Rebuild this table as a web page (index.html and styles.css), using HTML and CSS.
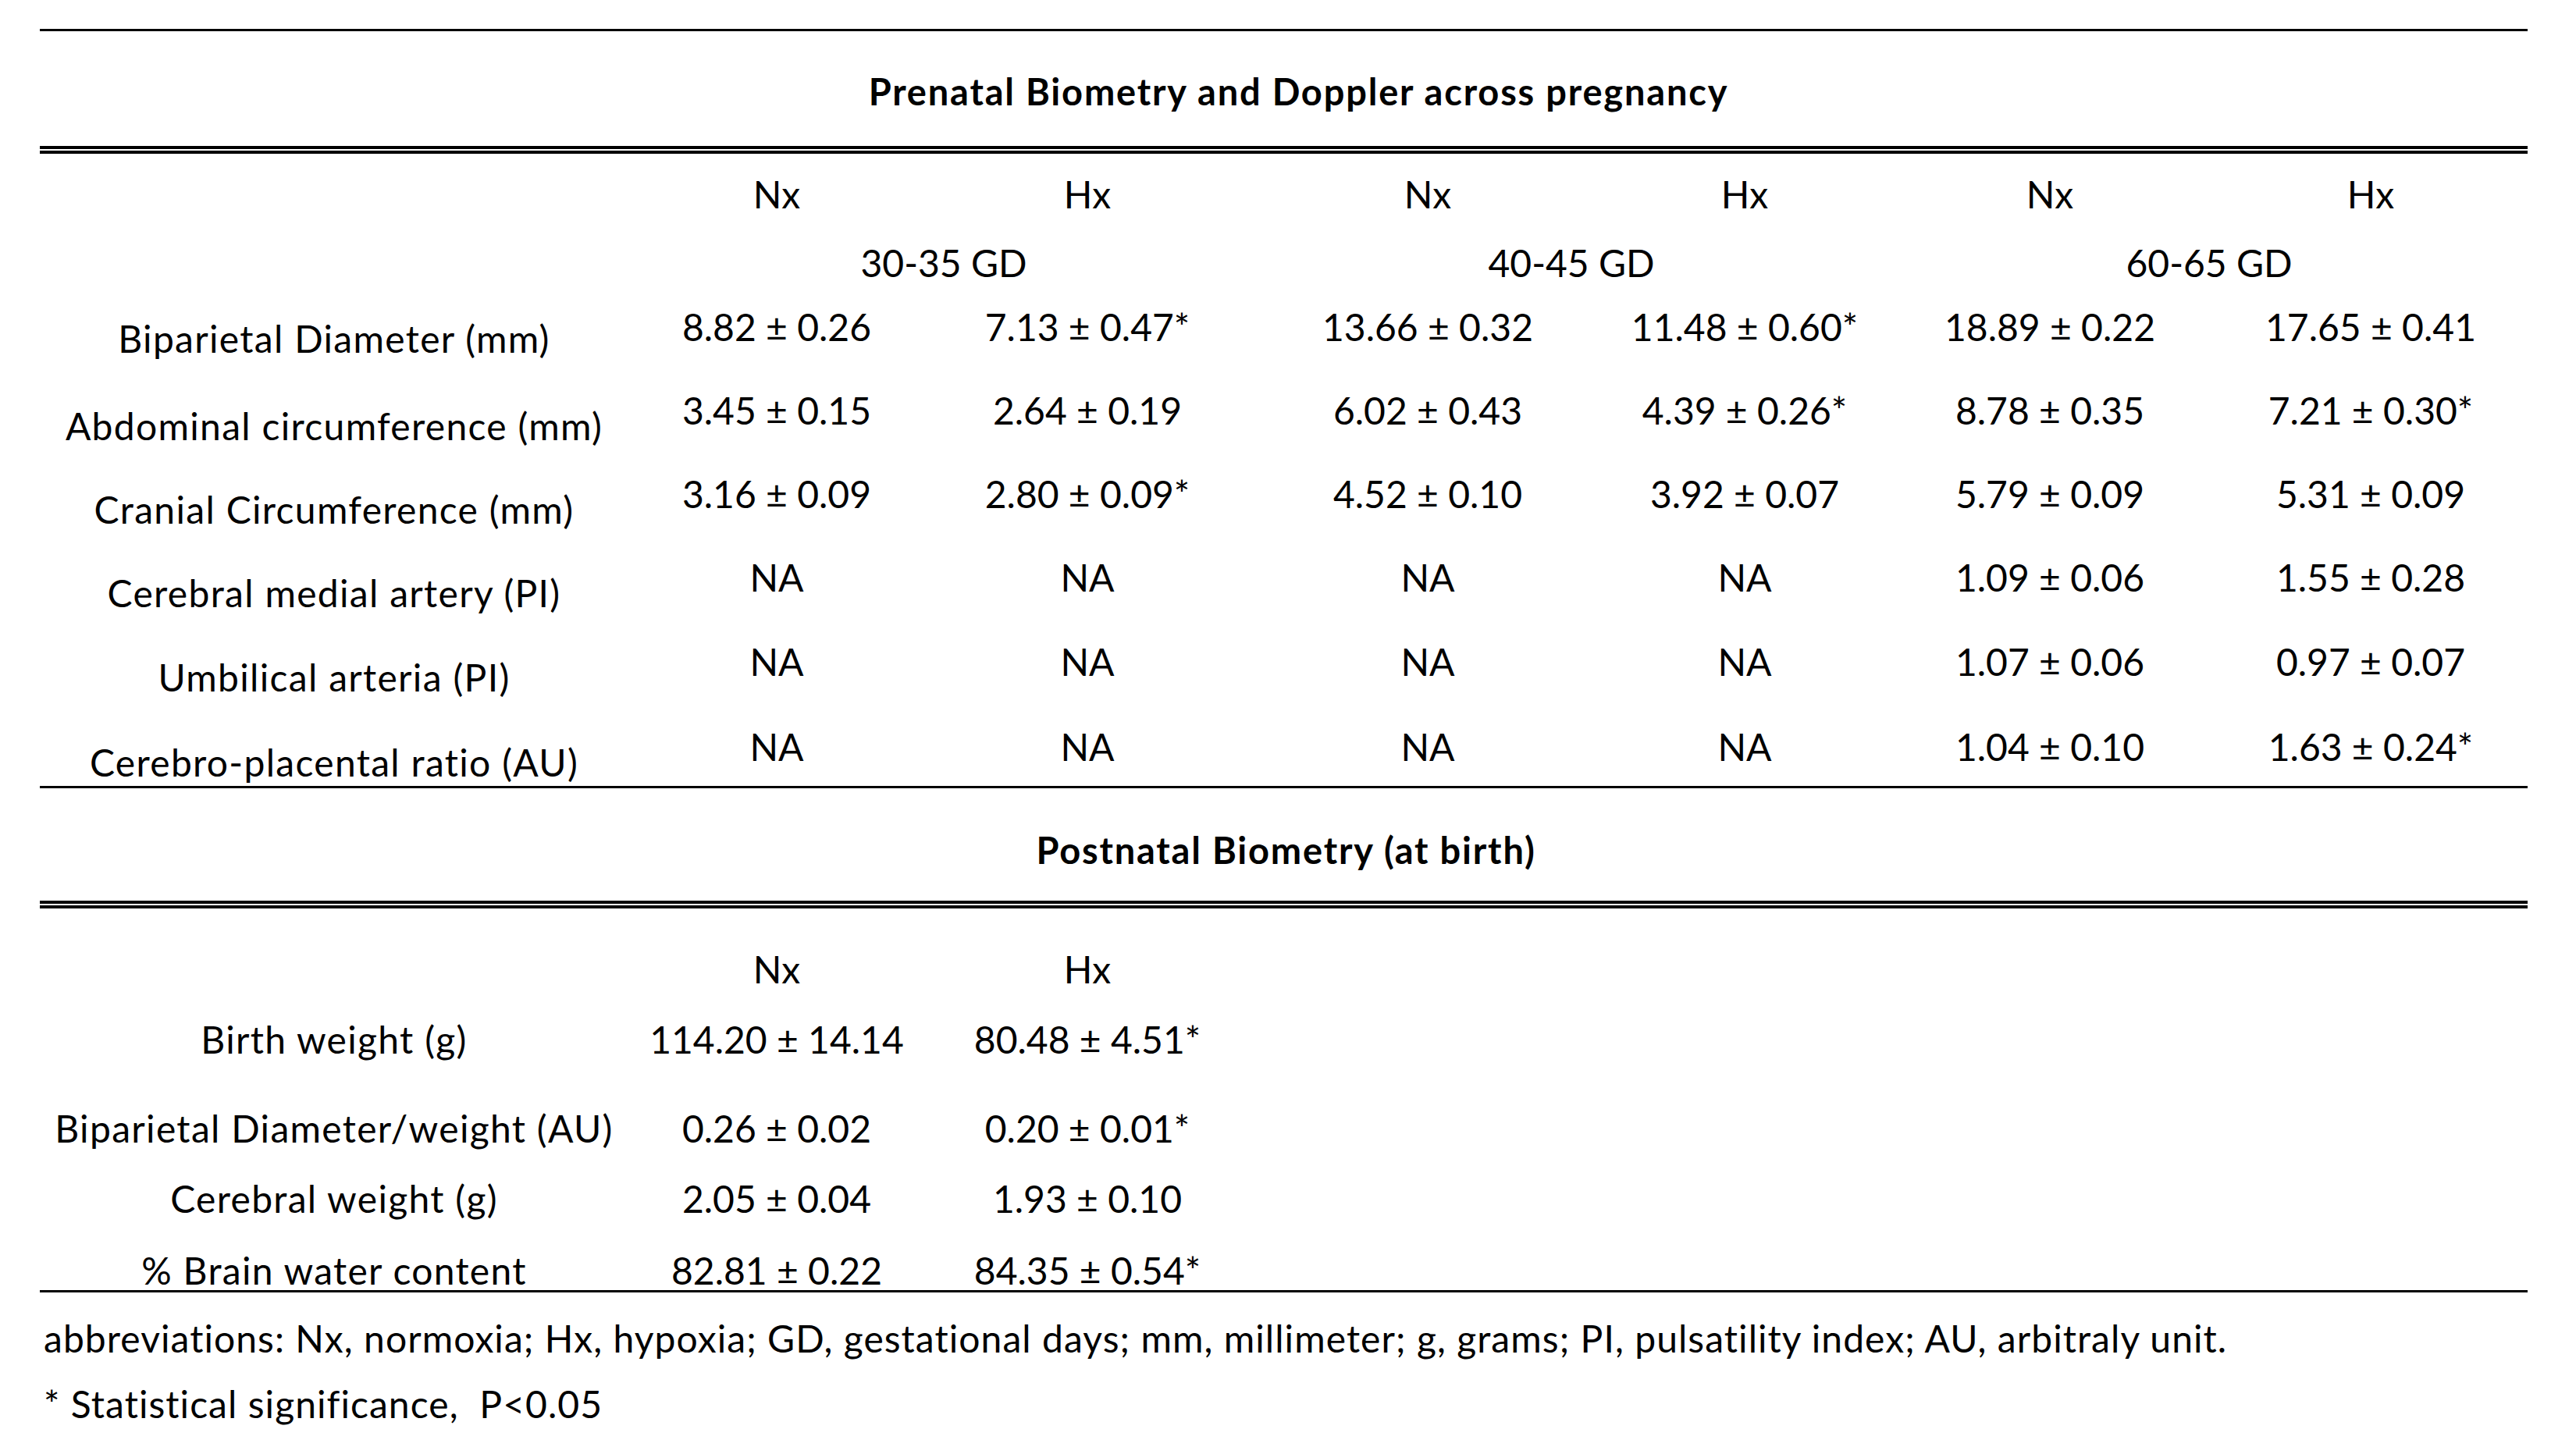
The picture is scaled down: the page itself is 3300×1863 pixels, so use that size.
FILE: index.html
```html
<!DOCTYPE html>
<html lang="en">
<head>
<meta charset="utf-8">
<title>Prenatal and Postnatal Biometry</title>
<link rel="stylesheet" href="styles.css">
</head>
<body>
<div class="page">
  <div class="rule rule-top"></div>
  <div class="section-title title-pre">Prenatal Biometry and Doppler across pregnancy</div>
  <div class="rule rule-double"></div>

  <div class="block block-pre">
    <div class="row row-head r-first">
      <div class="lbl"></div>
      <div>Nx</div><div>Hx</div><div>Nx</div><div>Hx</div><div>Nx</div><div>Hx</div>
    </div>
    <div class="row row-gd">
      <div class="lbl"></div>
      <div class="span2 gd">30-35 GD</div>
      <div class="span2 gd">40-45 GD</div>
      <div class="span2 gd">60-65 GD</div>
    </div>
    <div class="row row-data d1">
      <div class="lbl low low-a">Biparietal Diameter (mm)</div>
      <div>8.82 ± 0.26</div><div>7.13 ± 0.47*</div><div>13.66 ± 0.32</div><div>11.48 ± 0.60*</div><div>18.89 ± 0.22</div><div>17.65 ± 0.41</div>
    </div>
    <div class="row row-data">
      <div class="lbl low">Abdominal circumference (mm)</div>
      <div>3.45 ± 0.15</div><div>2.64 ± 0.19</div><div>6.02 ± 0.43</div><div>4.39 ± 0.26*</div><div>8.78 ± 0.35</div><div>7.21 ± 0.30*</div>
    </div>
    <div class="row row-data">
      <div class="lbl low">Cranial Circumference (mm)</div>
      <div>3.16 ± 0.09</div><div>2.80 ± 0.09*</div><div>4.52 ± 0.10</div><div>3.92 ± 0.07</div><div>5.79 ± 0.09</div><div>5.31 ± 0.09</div>
    </div>
    <div class="row row-data">
      <div class="lbl low">Cerebral medial artery (PI)</div>
      <div>NA</div><div>NA</div><div>NA</div><div>NA</div><div>1.09 ± 0.06</div><div>1.55 ± 0.28</div>
    </div>
    <div class="row row-data d5">
      <div class="lbl low">Umbilical arteria (PI)</div>
      <div>NA</div><div>NA</div><div>NA</div><div>NA</div><div>1.07 ± 0.06</div><div>0.97 ± 0.07</div>
    </div>
    <div class="row row-data d6">
      <div class="lbl low low-z">Cerebro-placental ratio (AU)</div>
      <div>NA</div><div>NA</div><div>NA</div><div>NA</div><div>1.04 ± 0.10</div><div>1.63 ± 0.24*</div>
    </div>
  </div>

  <div class="rule rule-single"></div>
  <div class="section-title title-post">Postnatal Biometry (at birth)</div>
  <div class="rule rule-double"></div>

  <div class="block block-post">
    <div class="row p-head">
      <div class="lbl"></div><div>Nx</div><div>Hx</div>
    </div>
    <div class="row p-birth">
      <div class="lbl">Birth weight (g)</div><div>114.20 ± 14.14</div><div>80.48 ± 4.51*</div>
    </div>
    <div class="row p-bpd">
      <div class="lbl">Biparietal Diameter/weight (AU)</div><div>0.26 ± 0.02</div><div>0.20 ± 0.01*</div>
    </div>
    <div class="row p-cw">
      <div class="lbl">Cerebral weight (g)</div><div>2.05 ± 0.04</div><div>1.93 ± 0.10</div>
    </div>
    <div class="row p-water">
      <div class="lbl">% Brain water content</div><div>82.81 ± 0.22</div><div>84.35 ± 0.54*</div>
    </div>
  </div>

  <div class="rule rule-end"></div>
  <p class="note note-abbr">abbreviations: Nx, normoxia; Hx, hypoxia; GD, gestational days; mm, millimeter; g, grams; PI, pulsatility index; AU, arbitraly unit.</p>
  <p class="note note-sig">* Statistical significance,&nbsp; P&lt;0.05</p>
</div>
</body>
</html>
```

FILE: styles.css
```css
html, body {
  margin: 0;
  padding: 0;
  background: #ffffff;
}

body {
  width: 3300px;
  height: 1863px;
  overflow: hidden;
  color: #000000;
  font-family: Lato, "Open Sans", "Liberation Sans", sans-serif;
  font-size: 48px;
}

.page {
  margin-left: 51px;
  width: 3187px;
}

.rule {
  background: #000000;
}

.rule-top {
  margin-top: 37px;
  height: 3px;
}

.rule-single {
  margin-top: 25px;
  height: 3px;
}

.rule-end {
  margin-top: 0;
  height: 3px;
}

.rule-double {
  height: 2px;
  background: transparent;
  border-top: 4px solid #000000;
  border-bottom: 4px solid #000000;
}

.section-title {
  font-weight: 700;
  font-size: 47px;
  letter-spacing: 1.8px;
  text-align: center;
  box-sizing: border-box;
}

.title-pre {
  height: 147px;
  line-height: 139px;
  padding-top: 8px;
  padding-left: 38px;
}

.title-post {
  height: 144px;
  line-height: 130px;
  padding-top: 14px;
  padding-left: 6px;
}

.row {
  display: grid;
  grid-template-columns: 754px 380px 416px 456px 356px 426px 396px;
  height: 50px;
  line-height: 50px;
  text-align: center;
  white-space: nowrap;
}

.lbl {
  letter-spacing: 1.3px;
}

.span2 {
  grid-column: span 2;
}

.gd {
  padding-left: 12px;
}

.low {
  padding-top: 20px;
}

.low-a {
  padding-top: 15px;
}

.low-z {
  padding-top: 20px;
}

/* prenatal vertical rhythm */
.r-first { margin-top: 27px; }
.row-gd { margin-top: 38px; }
.row-data { margin-top: 57px; }
.d1.row-data { margin-top: 32px; }
.d5.row-data { margin-top: 58px; }
.d6.row-data { margin-top: 59px; }

/* postnatal vertical rhythm */
.p-head { margin-top: 53px; }
.p-birth { margin-top: 40px; }
.p-bpd { margin-top: 64px; }
.p-cw { margin-top: 40px; }
.p-water { margin-top: 42px; }

.note {
  margin: 0;
  padding-left: 5px;
  height: 50px;
  line-height: 50px;
  font-size: 48px;
  letter-spacing: 1.05px;
  white-space: nowrap;
}

.note-abbr { margin-top: 34px; }
.note-sig { margin-top: 34px; }
```
